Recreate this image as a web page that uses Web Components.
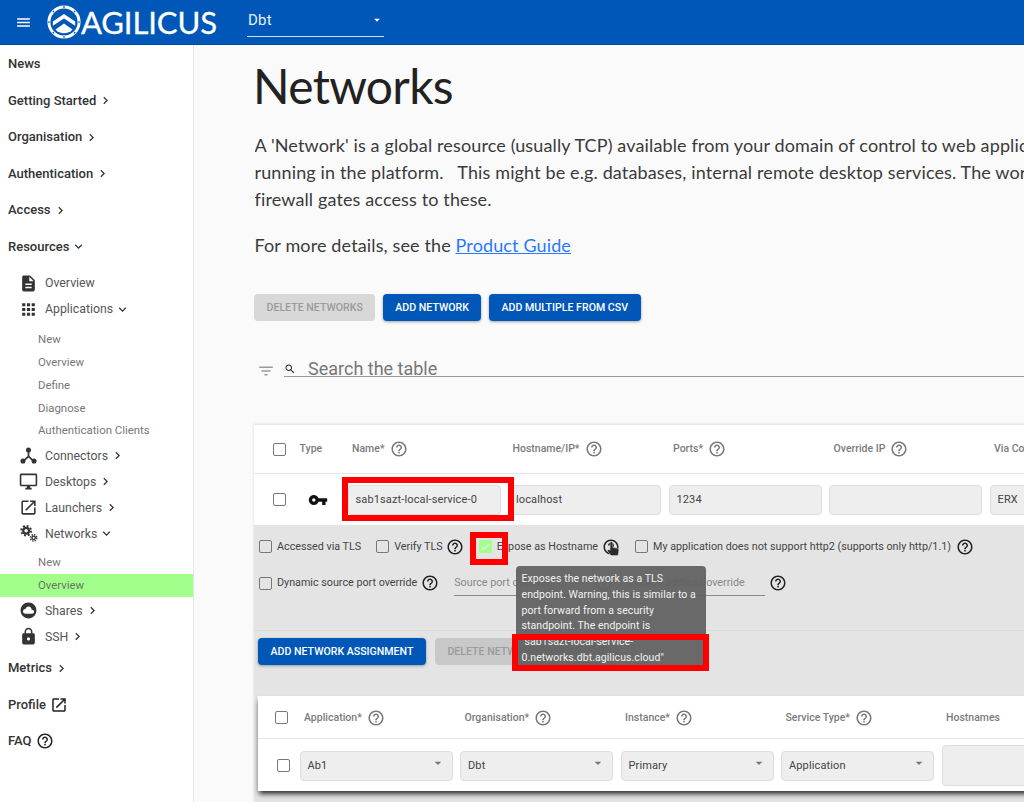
<!DOCTYPE html>
<html lang="en"><head><meta charset="utf-8"><title>Networks</title>
<style>
html,body{margin:0;height:100%;overflow:hidden;background:#fafafa;font-family:Roboto,"Liberation Sans",sans-serif}
</style></head><body>
<x-app>
  <x-toolbar slot="top"></x-toolbar>
  <x-nav slot="nav">
    <x-item>News</x-item>
    <x-item chev="right">Getting Started</x-item>
    <x-item chev="right">Organisation</x-item>
    <x-item chev="right">Authentication</x-item>
    <x-item chev="right">Access</x-item>
    <x-item chev="down" style="margin-bottom:5.25px">Resources</x-item>
    <x-item level="1" icon="doc">Overview</x-item>
    <x-item level="1" icon="apps" chev="down" style="margin-bottom:5.5px">Applications</x-item>
    <x-item level="2">New</x-item>
    <x-item level="2">Overview</x-item>
    <x-item level="2">Define</x-item>
    <x-item level="2">Diagnose</x-item>
    <x-item level="2" style="margin-bottom:.8px">Authentication Clients</x-item>
    <x-item level="1" icon="graph" chev="right">Connectors</x-item>
    <x-item level="1" icon="desktop" chev="right">Desktops</x-item>
    <x-item level="1" icon="open" chev="right">Launchers</x-item>
    <x-item level="1" icon="gears" chev="down" style="margin-bottom:4.5px">Networks</x-item>
    <x-item level="2">New</x-item>
    <x-item level="2" active style="margin-bottom:1.2px">Overview</x-item>
    <x-item level="1" icon="cloud" chev="right">Shares</x-item>
    <x-item level="1" icon="lock" chev="right">SSH</x-item>
    <x-item chev="right">Metrics</x-item>
    <x-item trail="open">Profile</x-item>
    <x-item trail="help">FAQ</x-item>
  </x-nav>
  <x-networks-page slot="main"></x-networks-page>
</x-app>
<script>
const P={
menu:'M3 18h18v-2H3v2zm0-5h18v-2H3v2zm0-7v2h18V6H3z',
doc:'M14 2H6c-1.1 0-2 .9-2 2v16c0 1.1.89 2 1.99 2H18c1.1 0 2-.9 2-2V8l-6-6zm2 16H8v-2h8v2zm0-4H8v-2h8v2zm-3-5V3.5L18.5 9H13z',
apps:'M4 8h4V4H4v4zm6 12h4v-4h-4v4zm-6 0h4v-4H4v4zm0-6h4v-4H4v4zm6 0h4v-4h-4v4zm6-10v4h4V4h-4zm-6 4h4V4h-4v4zm6 6h4v-4h-4v4zm0 6h4v-4h-4v4z',
desktop:'M21 2H3c-1.1 0-2 .9-2 2v12c0 1.1.9 2 2 2h7v2H8v2h8v-2h-2v-2h7c1.1 0 2-.9 2-2V4c0-1.1-.9-2-2-2zm0 14H3V4h18v12z',
open:'M19 19H5V5h7V3H5c-1.11 0-2 .9-2 2v14c0 1.1.89 2 2 2h14c1.1 0 2-.9 2-2v-7h-2v7zM14 3v2h3.59l-9.83 9.83 1.41 1.41L19 6.41V10h2V3h-7z',
cloud:'M12 2C6.47 2 2 6.47 2 12s4.47 10 10 10 10-4.47 10-10S17.53 2 12 2zm4.5 14H8c-1.66 0-3-1.34-3-3s1.34-3 3-3l.14.01C8.58 8.28 10.13 7 12 7c2.21 0 4 1.79 4 4h.5c1.38 0 2.5 1.12 2.5 2.5S17.88 16 16.5 16z',
lock:'M18 8h-1V6c0-2.76-2.24-5-5-5S7 3.24 7 6v2H6c-1.1 0-2 .9-2 2v10c0 1.1.9 2 2 2h12c1.1 0 2-.9 2-2V10c0-1.1-.9-2-2-2zm-6 9c-1.1 0-2-.9-2-2s.9-2 2-2 2 .9 2 2-.9 2-2 2zm3.1-9H8.9V6c0-1.71 1.39-3.1 3.1-3.1 1.71 0 3.1 1.39 3.1 3.1v2z',
help:'M11 18h2v-2h-2v2zm1-16C6.48 2 2 6.48 2 12s4.48 10 10 10 10-4.48 10-10S17.52 2 12 2zm0 18c-4.41 0-8-3.59-8-8s3.59-8 8-8 8 3.59 8 8-3.59 8-8 8zm0-14c-2.21 0-4 1.79-4 4h2c0-1.1.9-2 2-2s2 .9 2 2c0 2-3 1.75-3 5h2c0-2.25 3-2.5 3-5 0-2.21-1.79-4-4-4z',
right:'M10 6L8.59 7.41 13.17 12l-4.58 4.59L10 18l6-6z',
down:'M16.59 8.59L12 13.17 7.41 8.59 6 10l6 6 6-6z',
key:'M12.65 10C11.83 7.67 9.61 6 7 6c-3.31 0-6 2.69-6 6s2.69 6 6 6c2.61 0 4.83-1.67 5.65-4H17v4h4v-4h2v-4H12.65zM7 14c-1.1 0-2-.9-2-2s.9-2 2-2 2 .9 2 2-.9 2-2 2z',
search:'M15.5 14h-.79l-.28-.27C15.41 12.59 16 11.11 16 9.5 16 5.91 13.09 3 9.5 3S3 5.91 3 9.5 5.91 16 9.5 16c1.61 0 3.09-.59 4.23-1.57l.27.28v.79l5 4.99L20.49 19l-4.99-5zm-6 0C7.01 14 5 11.99 5 9.5S7.01 5 9.5 5 14 7.01 14 9.5 11.99 14 9.5 14z',
filter:'M10 18h4v-2h-4v2zM3 6v2h18V6H3zm3 7h12v-2H6v2z',
check:'M9 16.17L4.83 12l-1.41 1.41L9 19 21 7l-1.41-1.41z',
arrow:'M7 10l5 5 5-5z'
};
const EXTRA={
graph:'<path d="M12 6L12 13L5.5 19M12 13L18.500 19" fill="none" stroke="currentColor" stroke-width="2.2"/><circle cx="12" cy="5" r="3.2" fill="currentColor"/><circle cx="5" cy="19" r="3.2" fill="currentColor"/><circle cx="19" cy="19" r="3.2" fill="currentColor"/>',
gears:'<circle cx="9" cy="8.500" r="5" fill="currentColor"/><circle cx="9" cy="8.500" r="6.200" fill="none" stroke="currentColor" stroke-width="2.400" stroke-dasharray="2.400 2.470"/><circle cx="9" cy="8.500" r="2.200" fill="#fff"/><circle cx="18.500" cy="17.500" r="3" fill="currentColor"/><circle cx="18.500" cy="17.500" r="4" fill="none" stroke="currentColor" stroke-width="1.800" stroke-dasharray="1.700 1.440"/><circle cx="18.500" cy="17.500" r="1.300" fill="#fff"/>',
hand:'<path d="M9 2.500c1 0 1.800.8 1.800 1.800v6l6.500 1.500c1.500.4 2.200 1.400 2.200 2.700l-.8 6c-.2 1-1 1.500-2 1.500H10c-.8 0-1.400-.3-1.900-.9L3 15.300l1.200-1.200c.5-.5 1.300-.6 1.900-.2l1.100.7V4.300c0-1 .8-1.800 1.800-1.800z" fill="#2b2b2b" stroke="#ddd" stroke-width=".6"/>'
};
function def(name,css,html){
  customElements.define(name,class extends HTMLElement{
    constructor(){super();this.attachShadow({mode:'open'});}
    connectedCallback(){
      if(this._d)return;this._d=1;
      this.shadowRoot.innerHTML='<style>'+css+'</style>'+(typeof html==='function'?html(this):html);
    }
  });
}
const svg=(n,s,c)=>n?`<svg viewBox="0 0 24 24" width="${s}" height="${s}" style="display:block;flex:none;color:${c||'currentColor'}" aria-hidden="true">${EXTRA[n]||`<path fill="currentColor" d="${P[n]}"/>`}</svg>`:'';

def('x-app',`
:host{display:grid;grid-template-columns:194px 1fr;grid-template-rows:45px 1fr;width:1024px;height:802px;overflow:hidden}
.t{grid-column:1/3}.n{border-right:1px solid #e6e6e6;background:#fff;min-height:0;overflow:hidden;box-sizing:border-box}.m{min-width:0;min-height:0;overflow:hidden;background:#fafafa}
`,`<div class="t"><slot name="top"></slot></div><div class="n"><slot name="nav"></slot></div><div class="m"><slot name="main"></slot></div>`);

def('x-toolbar',`
:host{display:flex;align-items:center;height:45px;background:#0057b8;color:#fff;box-sizing:border-box;border-bottom:1px solid #004a9e}
.h{margin-left:15px;width:17px;height:17px;display:flex}
.logo{margin-left:15px;display:block}
.w{font:400 31px/45px Lato,sans-serif;margin-left:0;letter-spacing:-.1px;width:166px;-webkit-text-stroke:.3px #fff}
.sel{width:137px;height:37px;border-bottom:1px solid #cfe0f3;box-sizing:border-box;display:flex;align-items:center;justify-content:space-between;margin-top:-8px;padding:5px 0 0 1px;font:400 15px/20px Roboto,sans-serif;color:#e8f0fa;letter-spacing:.2px}
`,`<span class="h">${svg('menu',17)}</span>
<svg class="logo" width="34" height="34" viewBox="0 0 32 32" aria-hidden="true">
<circle cx="16" cy="16" r="14.200" fill="none" stroke="#fff" stroke-width="2.800"/>
<g fill="#0057b8"><circle cx="16" cy="1.800" r=".8"/><circle cx="30.200" cy="16" r=".8"/><circle cx="16" cy="30.200" r=".8"/><circle cx="1.800" cy="16" r=".8"/><circle cx="6" cy="6" r=".8"/><circle cx="26" cy="6" r=".8"/><circle cx="6" cy="26" r=".8"/><circle cx="26" cy="26" r=".8"/></g>
<path fill="#fff" d="M5.500 15.500L16 8.500l10.500 7v4L16 12.800 5.500 19.500z"/>
<path fill="#fff" d="M8 23l8-5.500L24 23a10.500 10.500 0 0 1-16 0z"/>
</svg>
<span class="w">AGILICUS</span>
<div class="sel"><span>Dbt</span>${svg('arrow',14,'#fff')}</div>`);

def('x-nav',':host{display:block;padding-top:1px}','<slot></slot>');

def('x-item',`
:host{display:flex;align-items:center;box-sizing:border-box;font:500 13px/18px Roboto,sans-serif;color:#333;white-space:nowrap}
:host(:not([level])){height:36.5px;padding-left:8px}
:host([level="1"]){height:26px;padding-left:19px;font-size:12.3px;font-weight:400;color:#555}
:host([level="2"]){height:22.8px;padding-left:38px;font-size:11.4px;font-weight:400;color:#777}
:host([active]){background:#a2ff8c;color:#63795e}
.i{width:26px;display:flex;color:#333}
.c{margin-left:2px;display:flex;color:#333}
.t{margin-left:4px;display:flex;color:#222}
`,h=>{
  const i=h.getAttribute('icon'),c=h.getAttribute('chev'),t=h.getAttribute('trail');
  return (i?`<span class="i">${svg(i,19)}</span>`:'')+'<slot></slot>'+(c?`<span class="c">${svg(c,15)}</span>`:'')+(t?`<span class="t">${svg(t,18)}</span>`:'');
});

def('x-btn',`
:host{display:inline-flex;align-items:center;height:27px;padding:0 12.5px;border-radius:4px;background:#0057b8;color:#fff;font:500 10.6px/27px Roboto,sans-serif;white-space:nowrap;box-shadow:0 1px 3px rgba(0,0,0,.35);box-sizing:border-box}
:host([off]){background:#d8d8d8;color:#9b9b9b;box-shadow:none}
:host([dim]){background:#c8c8c8;color:#9b9b9b;box-shadow:none}
`,'<slot></slot>');

def('x-check',`
:host{display:inline-flex;flex:none;width:13px;height:13px;box-sizing:border-box;border:1.500px solid #777;border-radius:2px;background:transparent}
:host([on]){background:#a2ff8c;border:0;align-items:center;justify-content:center;color:#fff}
`,h=>h.hasAttribute('on')?svg('check',11,'#fff'):'');

def('x-help',':host{display:inline-flex;flex:none;margin-left:5px}',h=>svg('help',18,h.getAttribute('color')||'#222'));

def('x-th',`
:host{display:flex;align-items:center;padding-left:4.500px;font:500 10.5px/16px Roboto,sans-serif;color:#7b7b7b;white-space:nowrap}
`,h=>'<slot></slot>'+(h.hasAttribute('help')?`<x-help color="#777"></x-help>`:''));

def('x-field',`
:host{display:flex;align-items:center;box-sizing:border-box;width:153px;height:30px;background:#eee;border:1px solid #ddd;border-radius:4px;padding:0 6px 0 7px;font:400 11px/16px Roboto,sans-serif;color:#444;letter-spacing:.13px;white-space:nowrap;justify-content:space-between}
:host([tall]){height:41px}
.a{margin-top:-6px}
`,h=>'<span><slot></slot></span>'+(h.hasAttribute('select')?`<span class="a">${svg('arrow',16,'#777')}</span>`:''));

def('x-lab',`
:host{display:inline-flex;align-items:center;font:400 10.75px/16px Roboto,sans-serif;color:#444;white-space:nowrap}
x-check{margin-right:5px}
`,h=>`<x-check ${h.hasAttribute('on')?'on':''}></x-check><slot></slot>`);

def('x-networks-page',`
:host{display:block;width:830px;height:757px;overflow:hidden;position:relative;color:#333}
h1{font:400 48px/56px Lato,sans-serif;margin:13px 0 0 59px;color:#222;letter-spacing:-.7px}
.p{margin:0 0 0 60.5px;font:400 18px/27px Lato,sans-serif;color:#3a3a3a;white-space:pre;width:770px;overflow:hidden;letter-spacing:.13px}
.intro{margin-top:18px}
.more{margin-top:19px}
a{color:#2979ff;text-decoration:underline}
.btns{display:flex;gap:7.5px;margin:35px 0 0 60px}
.search{display:flex;margin:36px 0 0 63px;height:26px;align-items:flex-start}
.search .f{margin-top:5px;display:flex;color:#999}
.s{margin-left:9px;flex:1;display:flex;align-items:flex-start;border-bottom:1px solid #999;height:20px;box-sizing:border-box}
.s span.l{font:400 18px/24px Roboto,sans-serif;color:#777;margin-left:12px;height:19px;white-space:nowrap}
.s .m{display:flex;color:#222;margin-top:6px;margin-left:0}
.card{margin:42px 0 0 60px;width:900px;background:#fff;box-shadow:0 -1px 3px rgba(0,0,0,.12)}
.row{display:grid;grid-template-columns:19.500px 40.500px repeat(5,153px);column-gap:7.500px;padding-left:18.5px;align-items:center;box-sizing:border-box}
.hd{height:49px;border-bottom:1px solid #e6e6e6}
.bd{height:51px}
.key{display:flex;margin-left:8px;color:#111}
.x{background:#e4e4e4;height:277px;position:relative}
.l1{display:flex;align-items:center;padding:12.5px 0 0 5px;height:18px}
.l2{display:flex;align-items:center;padding:18.5px 0 0 5px;height:18px}
.inp{font:400 10.75px/16px Roboto,sans-serif;color:#888;border-bottom:1px solid #8a8a8a;height:25px;box-sizing:border-box;display:flex;align-items:center;white-space:nowrap}
.sep{height:1px;margin-top:38px;background:#dcdcdc}
.btn2{display:flex;gap:9px;margin:7px 0 0 4px}
.inner{margin:31px 0 0 4px;width:880px;background:#fff;box-shadow:0 4px 5px -1px rgba(0,0,0,.8)}
.r2{display:grid;grid-template-columns:17.500px repeat(5,153px);column-gap:7.500px;align-items:center;box-sizing:border-box}
.h2{height:43px;padding:1px 0 0 16.5px;border-bottom:1px solid #e6e6e6}
.b2{height:52px;padding:1px 0 0 18.5px;grid-template-columns:15.500px repeat(5,153px)}
.tip{position:absolute;left:322px;top:521px;width:190px;height:104px;box-sizing:border-box;padding:5px 5px 5px 5.5px;background:rgba(96,96,96,.93);border-radius:4px;color:#f2f2f2;font:400 10.500px/15.800px Roboto,sans-serif;letter-spacing:.07px}
.red{position:absolute;box-sizing:border-box;border:6px solid #ff0000}
.hand{position:absolute;left:411px;top:495px}
`,`
<h1>Networks</h1>
<p class="p intro">A 'Network' is a global resource (usually TCP) available from your domain of control to web applic
running in the platform.   This might be e.g. databases, internal remote desktop services. The wor
firewall gates access to these.</p>
<p class="p more">For more details, see the <a>Product Guide</a></p>
<div class="btns"><x-btn off>DELETE NETWORKS</x-btn><x-btn>ADD NETWORK</x-btn><x-btn>ADD MULTIPLE FROM CSV</x-btn></div>
<div class="search"><span class="f">${svg('filter',18)}</span><div class="s"><span class="m">${svg('search',12)}</span><span class="l">Search the table</span></div></div>
<div class="card">
  <div class="row hd"><x-check></x-check><x-th style="padding-left:0">Type</x-th><x-th help>Name*</x-th><x-th help>Hostname/IP*</x-th><x-th help>Ports*</x-th><x-th help>Override IP</x-th><x-th>Via Co</x-th></div>
  <div class="row bd"><x-check></x-check><span class="key">${svg('key',20)}</span><x-field>sab1sazt-local-service-0</x-field><x-field>localhost</x-field><x-field>1234</x-field><x-field></x-field><x-field>ERX</x-field></div>
  <div class="x">
    <div class="l1">
      <x-lab>Accessed via TLS</x-lab>
      <x-lab style="margin-left:15px">Verify TLS</x-lab><x-help style="margin-left:3px"></x-help>
      <x-lab on style="margin-left:15px">Expose as Hostname</x-lab><x-help style="margin-left:4px"></x-help>
      <x-lab style="margin-left:15px">My application does not support http2 (supports only http/1.1)</x-lab><x-help></x-help>
    </div>
    <div class="l2">
      <x-lab>Dynamic source port override</x-lab><x-help style="margin-left:4px"></x-help>
      <div class="inp" style="margin-left:15px;width:166px">Source port override</div><x-help color="#888" style="margin-left:-25px"></x-help>
      <div class="inp" style="margin-left:16px;width:136px">Source address override</div><x-help style="margin-left:4px"></x-help>
    </div>
    <div class="sep"></div>
    <div class="btn2"><x-btn>ADD NETWORK ASSIGNMENT</x-btn><x-btn dim>DELETE NETWORK ASSIGNMENT</x-btn></div>
    <div class="inner">
      <div class="r2 h2"><x-check></x-check><x-th help>Application*</x-th><x-th help>Organisation*</x-th><x-th help>Instance*</x-th><x-th help>Service Type*</x-th><x-th>Hostnames</x-th></div>
      <div class="r2 b2"><x-check></x-check><x-field select>Ab1</x-field><x-field select>Dbt</x-field><x-field select>Primary</x-field><x-field select>Application</x-field><x-field tall></x-field></div>
    </div>
  </div>
</div>
<div class="hand">${svg('hand',17)}</div>
<div class="tip">Exposes the network as a TLS endpoint. Warning, this is similar to a port forward from a security standpoint. The endpoint is "sab1sazt-local-service-0.networks.dbt.agilicus.cloud"</div>
<div class="red" style="left:148px;top:432px;width:172px;height:44px"></div>
<div class="red" style="left:276px;top:487px;width:38px;height:33px"></div>
<div class="red" style="left:318px;top:589px;width:197px;height:37px"></div>
`);
</script>
</body></html>
